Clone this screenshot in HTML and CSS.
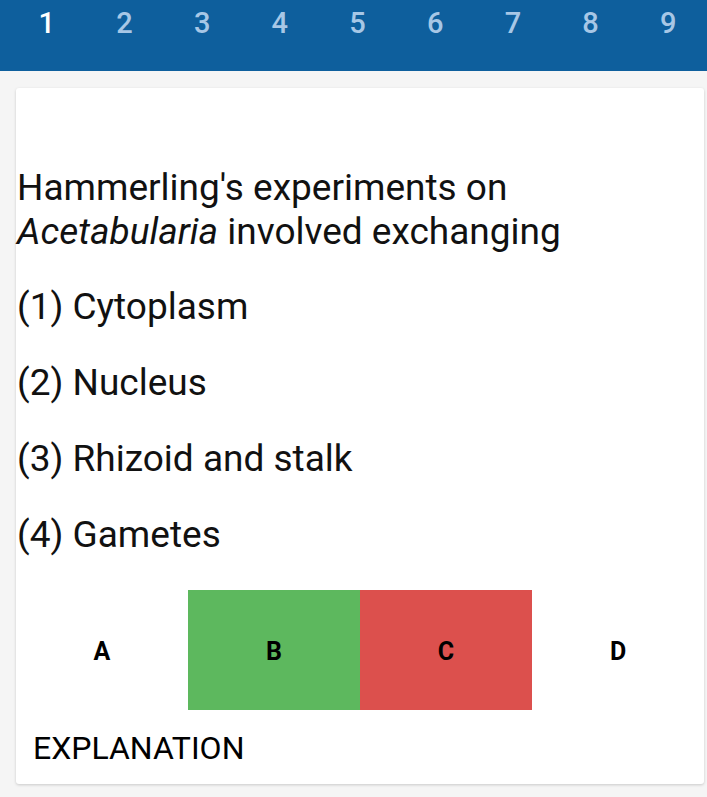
FILE: index.html
```html
<!DOCTYPE html>
<html>
<head>
<meta charset="utf-8">
<link rel="stylesheet" href="styles.css">
</head>
<body>
<header class="tabs">
  <span class="tab active">1</span>
  <span class="tab">2</span>
  <span class="tab">3</span>
  <span class="tab">4</span>
  <span class="tab">5</span>
  <span class="tab">6</span>
  <span class="tab">7</span>
  <span class="tab">8</span>
  <span class="tab">9</span>
</header>
<main class="page">
  <section class="card">
    <p class="question">Hammerling's experiments on <em>Acetabularia</em> involved exchanging</p>
    <p class="opt">(1) Cytoplasm</p>
    <p class="opt">(2) Nucleus</p>
    <p class="opt">(3) Rhizoid and stalk</p>
    <p class="opt">(4) Gametes</p>
    <div class="answers">
      <div class="ans">A</div>
      <div class="ans correct">B</div>
      <div class="ans wrong">C</div>
      <div class="ans">D</div>
    </div>
    <div class="explain">EXPLANATION</div>
  </section>
</main>
</body>
</html>
```
FILE: styles.css
```css
html, body {
  margin: 0;
  padding: 0;
}
body {
  background: #f5f5f5;
  font-family: Roboto, "Noto Sans", sans-serif;
  color: #111;
  width: 707px;
  height: 797px;
  overflow: hidden;
}
.tabs {
  background: #0e5f9d;
  height: 71px;
  display: flex;
  padding-left: 8px;
  box-sizing: border-box;
}
.tab {
  width: 78px;
  text-align: center;
  font-size: 29px;
  font-weight: 500;
  line-height: 46px;
  color: #a7c7e6;
}
.tab.active {
  color: #ffffff;
}
.page {
  padding: 17px 3px 0 16px;
}
.card {
  background: #fff;
  border-radius: 3px;
  box-shadow: 0 1px 3px rgba(0,0,0,0.18);
  padding: 78px 0 18px 0;
  height: 696px;
  box-sizing: border-box;
}
.question, .opt {
  margin: 0;
  font-size: 37px;
  line-height: 44px;
  padding-left: 1px;
}
.question em {
  font-style: italic;
}
.opt {
  margin-top: 32px;
}
.question + .opt {
  margin-top: 31px;
}
.answers {
  display: grid;
  grid-template-columns: repeat(4, 1fr);
  margin-top: 33px;
  height: 120px;
}
.ans {
  display: flex;
  align-items: center;
  justify-content: center;
  font-size: 25px;
  font-weight: 700;
  color: #000;
  padding-top: 3px;
}
.ans.correct {
  background: #5db85e;
}
.ans.wrong {
  background: #dc504d;
}
.explain {
  margin-top: 20px;
  padding-left: 17px;
  font-size: 32px;
  line-height: 36px;
  color: #000;
}
```
